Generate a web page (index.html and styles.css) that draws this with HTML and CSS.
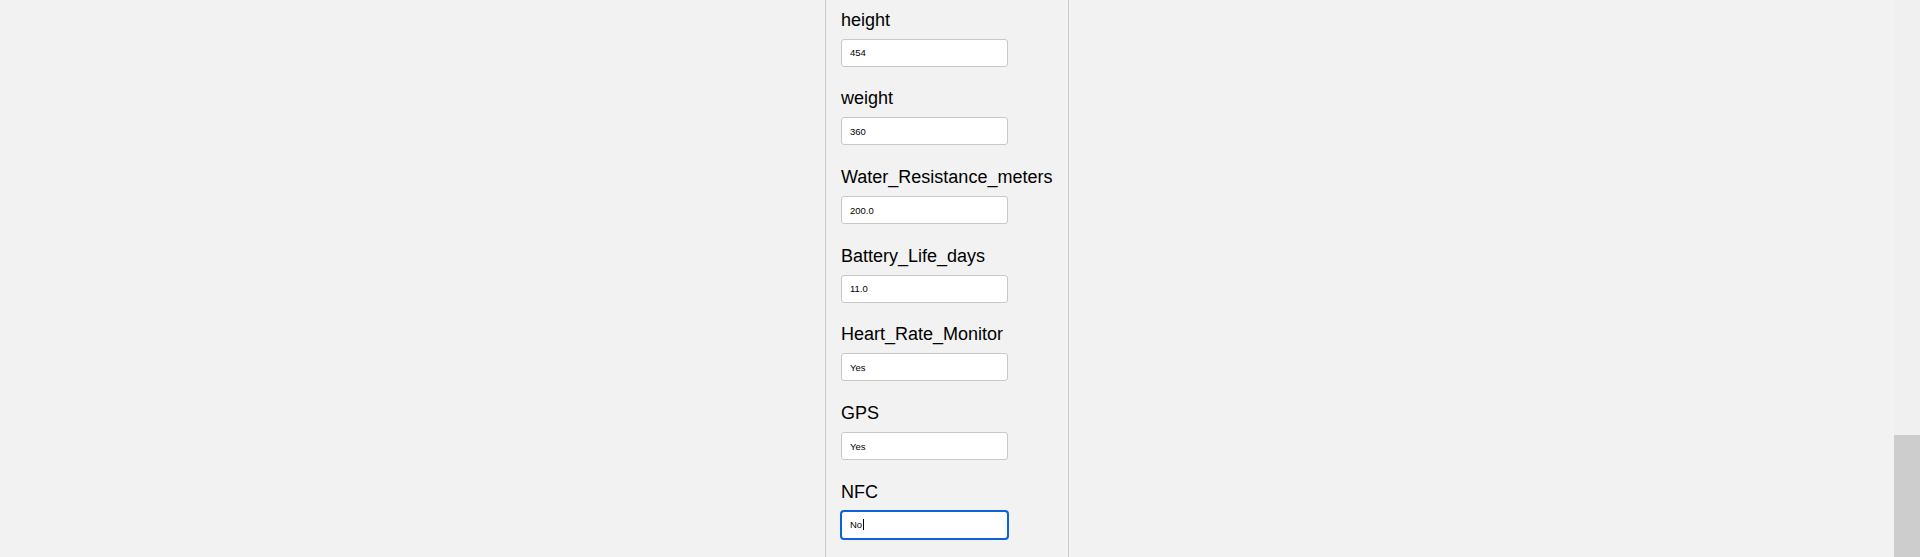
FILE: index.html
```html
<!DOCTYPE html>
<html lang="en">
<head>
<meta charset="utf-8">
<title>Form</title>
<link rel="stylesheet" href="styles.css">
</head>
<body>
<div class="main">
  <form class="panel">
    <div class="field">
      <label class="label" for="f-height">height</label>
      <input class="input" id="f-height" type="text" value="454">
    </div>
    <div class="field">
      <label class="label" for="f-weight">weight</label>
      <input class="input" id="f-weight" type="text" value="360">
    </div>
    <div class="field">
      <label class="label" for="f-water">Water_Resistance_meters</label>
      <input class="input" id="f-water" type="text" value="200.0">
    </div>
    <div class="field">
      <label class="label" for="f-battery">Battery_Life_days</label>
      <input class="input" id="f-battery" type="text" value="11.0">
    </div>
    <div class="field">
      <label class="label" for="f-hr">Heart_Rate_Monitor</label>
      <input class="input" id="f-hr" type="text" value="Yes">
    </div>
    <div class="field">
      <label class="label" for="f-gps">GPS</label>
      <input class="input" id="f-gps" type="text" value="Yes">
    </div>
    <div class="field">
      <label class="label" for="f-nfc">NFC</label>
      <div class="input input-focused" id="f-nfc" role="textbox" contenteditable="true">No<span class="caret"></span></div>
    </div>
  </form>
</div>
<div class="scrollbar"><div class="thumb"></div></div>
</body>
</html>
```
FILE: styles.css
```css
html, body {
  margin: 0;
  padding: 0;
}
body {
  background: #f2f2f2;
  height: 557px;
  overflow: hidden;
  display: flex;
  font-family: "Liberation Sans", Arial, sans-serif;
  color: #000;
}
.main {
  flex: 1;
  display: flex;
  justify-content: center;
}
.panel {
  box-sizing: border-box;
  width: 244px;
  margin: 0;
  padding: 9.7px 15px 0 15px;
  border-left: 1px solid #cacaca;
  border-right: 1px solid #cacaca;
  background: #f2f2f2;
}
.field {
  margin-bottom: 21.7px;
}
.label {
  display: block;
  font-size: 18px;
  line-height: normal;
  margin-bottom: 8px;
  white-space: nowrap;
}
.input {
  display: block;
  box-sizing: border-box;
  width: 167px;
  height: 28px;
  margin: 0;
  padding: 0 8px;
  border: 1px solid #c8c8c8;
  border-radius: 3px;
  background: #fff;
  font-family: "Liberation Sans", Arial, sans-serif;
  font-size: 9.5px;
  color: #000;
  outline: none;
}
.input-focused {
  display: flex;
  align-items: center;
  outline: 2px solid #0b63d8;
  outline-offset: -1px;
}
.input-focused:focus {
  outline: 2px solid #0b63d8;
}
.caret {
  display: inline-block;
  width: 1px;
  height: 11px;
  background: #000;
  margin-left: 0.5px;
}
.scrollbar {
  width: 26px;
  background: #f0f0f0;
  display: flex;
  flex-direction: column;
}
.thumb {
  margin-top: 435px;
  flex: 1;
  background: #cdcdcd;
}
```
